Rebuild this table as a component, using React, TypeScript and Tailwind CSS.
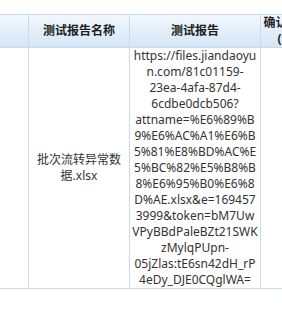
import React from "react";

const urlLines = [
  "https://files.jiandaoyu",
  "n.com/81c01159-",
  "23ea-4afa-87d4-",
  "6cdbe0dcb506?",
  "attname=%E6%89%B",
  "9%E6%AC%A1%E6%B",
  "5%81%E8%BD%AC%E",
  "5%BC%82%E5%B8%B",
  "8%E6%95%B0%E6%8",
  "D%AE.xlsx&e=169457",
  "3999&token=bM7Uw",
  "VPyBBdPaleBZt21SWK",
  "zMylqPUpn-",
  "05jZlas:tE6sn42dH_rP",
  "4eDy_DJE0CQglWA=",
];

export default function App() {
  return (
    <div className="h-[309px] w-[282px] overflow-hidden bg-white pt-[14px] font-['Noto_Sans','Noto_Sans_CJK_SC',sans-serif] text-[12px] leading-4 text-[#333]">
      {/* header row */}
      <div className="flex h-[34px] w-max border-y border-[#c6dbef] bg-linear-to-b from-[#f2f7fd] to-[#d4e6f6] font-bold text-[#1e1e1e]">
        <div className="w-[29px] shrink-0 border-r border-[#c6dbef]" />
        <div className="flex w-[101px] shrink-0 items-center justify-center border-r border-[#c6dbef]">
          测试报告名称
        </div>
        <div className="flex w-[131px] shrink-0 items-center justify-center border-r border-[#c6dbef]">
          测试报告
        </div>
        <div className="flex w-[53px] shrink-0 flex-col items-center justify-center">
          <div>确认金额</div>
          <div>(元)</div>
        </div>
      </div>

      {/* body row */}
      <div className="flex h-[241px] w-max border-b border-[#c6dbef]">
        <div className="w-[29px] shrink-0 border-r border-[#c6dbef]" />
        <div className="flex w-[101px] shrink-0 flex-col items-center justify-center border-r border-[#c6dbef] text-center">
          <div>批次流转异常数</div>
          <div>据.xlsx</div>
        </div>
        <div className="w-[131px] shrink-0 overflow-hidden border-r border-[#c6dbef] text-center">
          {urlLines.map((line) => (
            <div key={line} className="whitespace-nowrap">
              {line}
            </div>
          ))}
        </div>
        <div className="w-[53px] shrink-0" />
      </div>
    </div>
  );
}
